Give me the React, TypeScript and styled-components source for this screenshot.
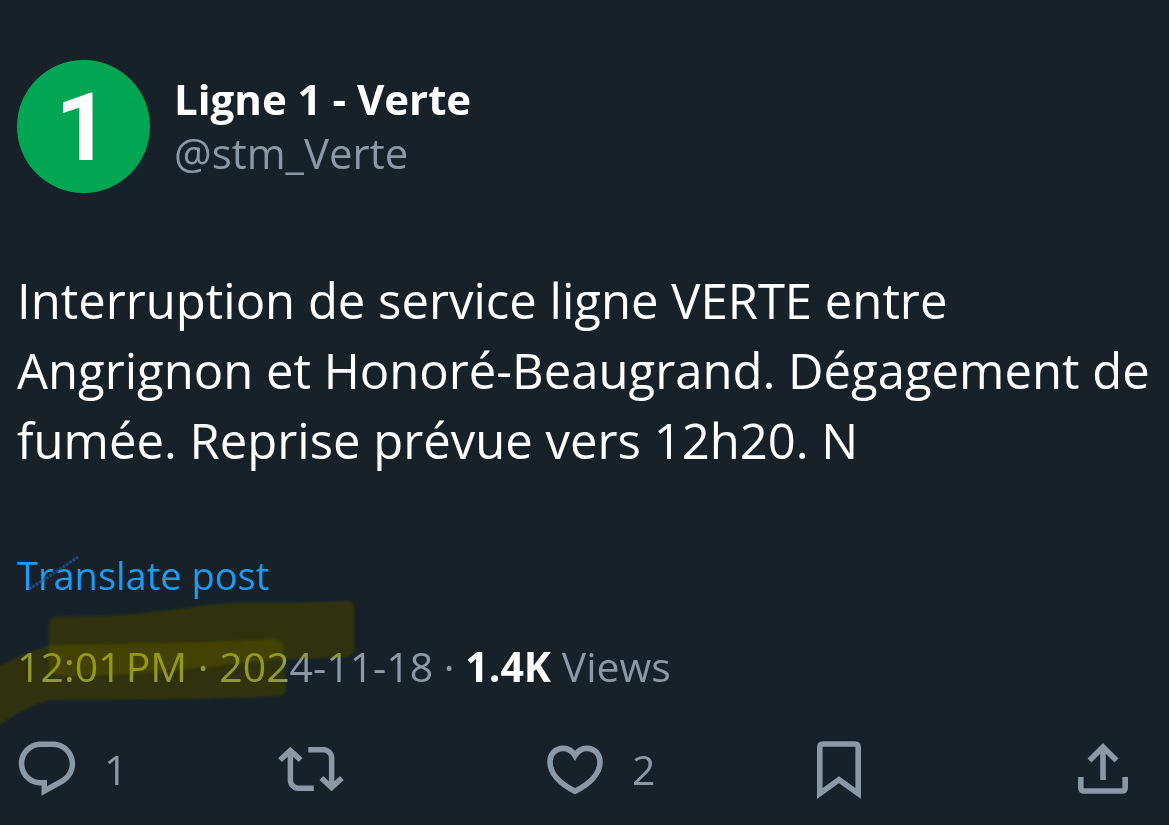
import React from "react";
import styled, { createGlobalStyle } from "styled-components";

const Global = createGlobalStyle`
  *, *::before, *::after { box-sizing: border-box; }
  body { margin: 0; background: #17212a; }
`;

const Post = styled.article`
  display: flex;
  flex-direction: column;
  min-height: 100vh;
  padding: 60px 16px 20px 17px;
  overflow: hidden;
  background: #17212a;
  color: #fff;
  font-family: "Open Sans", "Noto Sans", sans-serif;
`;

const Author = styled.header`
  display: flex;
  align-items: center;
  gap: 24px;
`;

const Avatar = styled.div`
  display: flex;
  flex: none;
  align-items: center;
  justify-content: center;
  width: 133px;
  height: 133px;
  padding: 2px 2px 0 0;
  border-radius: 50%;
  background: #00a651;
  font-family: Roboto, "Open Sans", sans-serif;
  font-size: 95px;
  font-weight: 700;
  line-height: 133px;
`;

const Names = styled.div`
  display: flex;
  flex-direction: column;
  padding-bottom: 2px;
`;

const DisplayName = styled.h1`
  margin: 0;
  font-size: 42px;
  font-weight: 700;
  line-height: 54px;
`;

const Handle = styled.a`
  color: #8b98a5;
  font-size: 42px;
  line-height: 54px;
  text-decoration: none;
`;

const Body = styled.p`
  margin: 72px 0 0;
  font-size: 49px;
  line-height: 70px;
`;

const Translate = styled.button`
  position: relative;
  align-self: flex-start;
  margin: 74px 0 0;
  padding: 0;
  border: 0;
  background: none;
  color: #1d9bf0;
  font-family: inherit;
  font-size: 38px;
  line-height: 52px;
  cursor: pointer;
`;

const PenMark = styled.svg`
  position: absolute;
  top: 0;
  left: 0;
  width: 70px;
  height: 52px;
  pointer-events: none;
`;

const Meta = styled.div`
  position: relative;
  margin-top: 37px;
  color: #8b98a5;
  font-size: 41px;
  line-height: 56px;
`;

const Views = styled.strong`
  color: #fff;
  font-weight: 700;
`;

const Marker = styled.svg<{ $blend: "multiply" | "screen" }>`
  position: absolute;
  top: -38px;
  left: -17px;
  width: 370px;
  height: 140px;
  overflow: visible;
  mix-blend-mode: ${(p) => p.$blend};
  filter: blur(1px);
  pointer-events: none;
`;

const Actions = styled.div`
  display: grid;
  grid-template-columns: repeat(4, 1fr) auto;
  margin: 42px 17px 0 -3px;
`;

const Action = styled.button`
  display: flex;
  align-items: center;
  gap: 24px;
  padding: 0;
  border: 0;
  background: none;
  color: #8b98a5;
  font-family: inherit;
  font-size: 41px;
  line-height: 66px;
  cursor: pointer;
`;

const Icon = styled.svg`
  flex: none;
  width: 66px;
  height: 66px;
`;

const UPPER_STROKE =
  "M49 27 Q49 18 55 17 C100 17 140 14 180 9 C215 3 240 2 285 3 L348 1 Q354 1 354 8 L354 48 Q354 56 347 57 C310 59 285 58 250 62 C200 68 160 72 110 75 C80 76 52 78 49 70 Z";
const LOWER_STROKE =
  "M-10 71 C10 60 30 51 50 45 C110 44 200 43 275 39 Q282 39 283 47 L286 90 Q286 95 278 96 C200 100 120 99 50 100 C30 106 15 113 -10 132 Z";

function HighlighterMarks() {
  return (
    <>
      {[UPPER_STROKE, LOWER_STROKE].map((d) => (
        <React.Fragment key={d}>
          <Marker $blend="multiply" viewBox="0 0 370 140" aria-hidden="true">
            <path d={d} fill="#f0f046" />
          </Marker>
          <Marker $blend="screen" viewBox="0 0 370 140" aria-hidden="true">
            <path d={d} fill="#1b1600" />
          </Marker>
        </React.Fragment>
      ))}
    </>
  );
}

const stroke = {
  fill: "none",
  stroke: "currentColor",
  strokeWidth: 5.6,
} as const;

const ReplyIcon = () => (
  <Icon viewBox="0 0 24 24" fill="currentColor" aria-hidden="true">
    <path d="M1.751 10c0-4.42 3.584-8 8.005-8h4.366c4.49 0 8.129 3.64 8.129 8.13 0 2.96-1.607 5.68-4.196 7.11l-8.054 4.46v-3.69h-.067c-4.49.1-8.183-3.51-8.183-8.01zm8.005-6c-3.317 0-6.005 2.69-6.005 6 0 3.37 2.77 6.08 6.138 6.01l.351-.01h1.761v2.3l5.087-2.81c1.951-1.08 3.163-3.13 3.163-5.36 0-3.39-2.744-6.13-6.129-6.13H9.756z" />
  </Icon>
);

const RepostIcon = () => (
  <Icon viewBox="0 0 24 24" fill="currentColor" aria-hidden="true">
    <path d="M4.5 3.88l4.432 4.14-1.364 1.46L5.5 7.55V16c0 1.1.896 2 2 2H13v2H7.5c-2.209 0-4-1.79-4-4V7.55L1.432 9.48.068 8.02 4.5 3.88zM16.5 6H11V4h5.5c2.209 0 4 1.79 4 4v8.45l2.068-1.93 1.364 1.46-4.432 4.14-4.432-4.14 1.364-1.46 2.068 1.93V8c0-1.1-.896-2-2-2z" />
  </Icon>
);

const LikeIcon = () => (
  <Icon viewBox="0 0 66 66" aria-hidden="true">
    <path
      {...stroke}
      d="M33 19.500C30 14.500 26 12.400 21 12.400C13.500 12.400 8 18 8 26C8 37 17.500 47.500 33 55.200C48.500 47.500 58 37 58 26C58 18 52.500 12.400 45 12.400C40 12.400 36 14.500 33 19.500Z"
    />
  </Icon>
);

const BookmarkIcon = () => (
  <Icon viewBox="0 0 66 66" aria-hidden="true">
    <path
      {...stroke}
      d="M13.800 57.500V11.500Q13.800 8 17.300 8H48.700Q52.200 8 52.200 11.500V57.500L33 43.800Z"
    />
  </Icon>
);

const ShareIcon = () => (
  <Icon viewBox="0 0 66 66" aria-hidden="true">
    <path
      {...stroke}
      d="M33 44V11M19.500 24.500L33 11L46.500 24.500M10.800 41V51.500Q10.800 55 14.300 55H51.700Q55.200 55 55.200 51.500V41"
    />
  </Icon>
);

export default function App() {
  return (
    <>
      <Global />
      <Post>
        <Author>
          <Avatar>1</Avatar>
          <Names>
            <DisplayName>Ligne 1 - Verte</DisplayName>
            <Handle href="#">@stm_Verte</Handle>
          </Names>
        </Author>
        <Body>
          Interruption de service ligne VERTE entre Angrignon et
          Honoré-Beaugrand. Dégagement de fumée. Reprise prévue vers 12h20. N
        </Body>
        <Translate type="button">
          Translate post
          <PenMark viewBox="0 0 70 52" aria-hidden="true">
            <path
              d="M12 40C24 33 42 21 61 8"
              fill="none"
              stroke="#1c5fae"
              strokeWidth="3"
              strokeDasharray="3 1"
              opacity="0.65"
            />
          </PenMark>
        </Translate>
        <Meta>
          12:01{"\u200A"}PM · 2024-11-18 · <Views>1.4K</Views> Views
          <HighlighterMarks />
        </Meta>
        <Actions>
          <Action type="button" aria-label="Reply, 1">
            <ReplyIcon />1
          </Action>
          <Action type="button" aria-label="Repost">
            <RepostIcon />
          </Action>
          <Action type="button" aria-label="Like, 2">
            <LikeIcon />2
          </Action>
          <Action type="button" aria-label="Bookmark">
            <BookmarkIcon />
          </Action>
          <Action type="button" aria-label="Share">
            <ShareIcon />
          </Action>
        </Actions>
      </Post>
    </>
  );
}
